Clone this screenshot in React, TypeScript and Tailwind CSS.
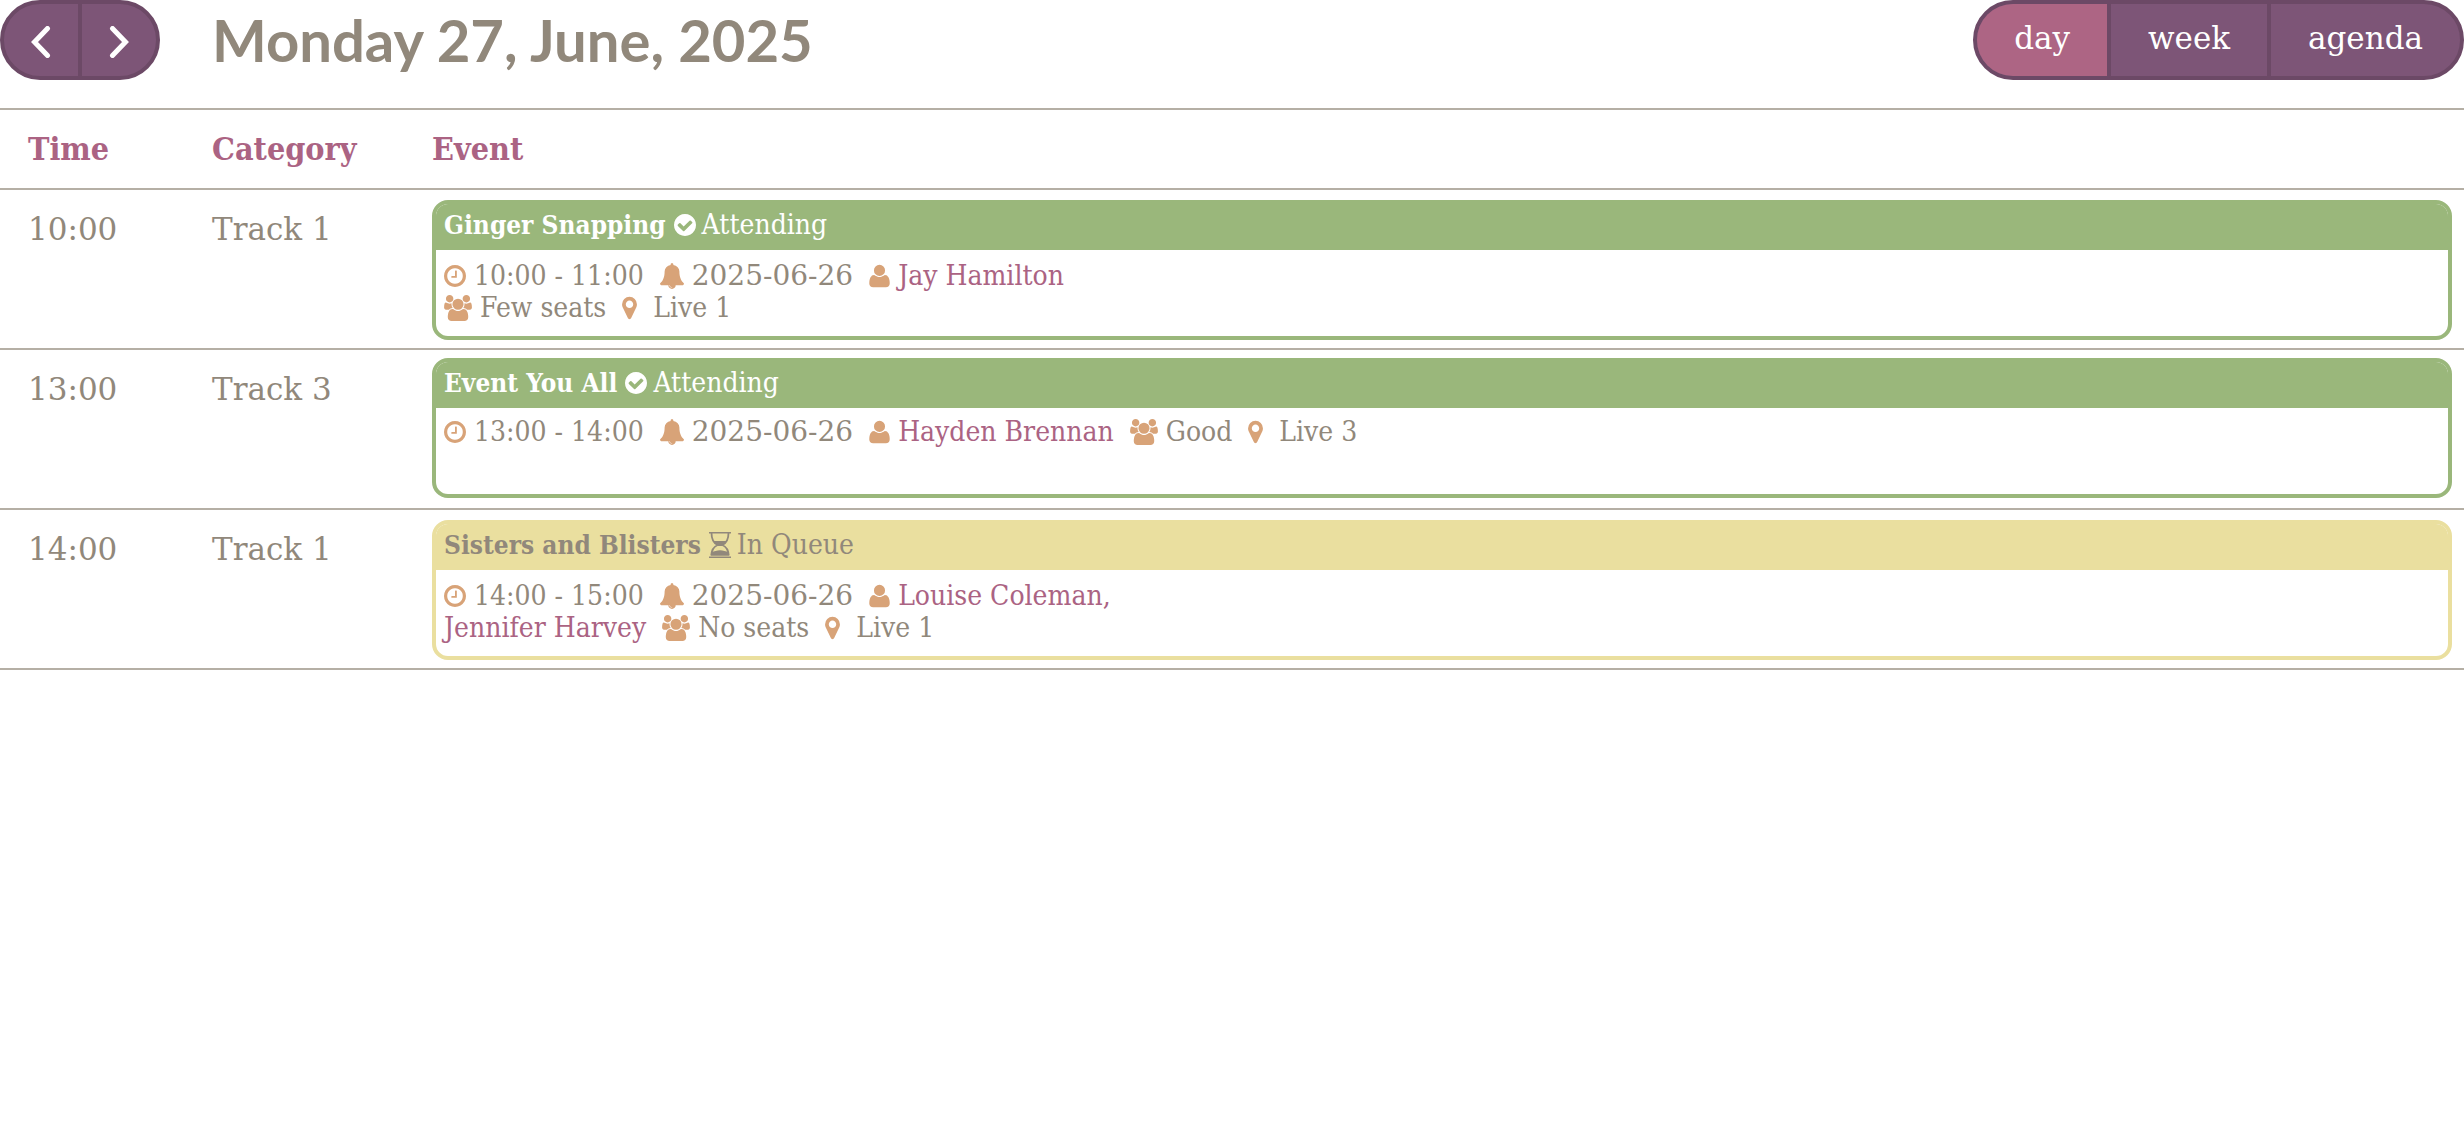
import type { ReactNode } from "react";

type IconProps = { d: string; viewBox: string; className: string; flip?: boolean };

function Icon({ d, viewBox, className, flip }: IconProps) {
  return (
    <svg viewBox={viewBox} className={`inline-block shrink-0 fill-current ${className}`} aria-hidden="true">
      <path d={d} transform={flip ? "scale(1,-1)" : undefined} />
    </svg>
  );
}

const ClockIcon = () => (
  <Icon
    viewBox="128 0 1536 1792"
    className="h-[26px] w-[22px]"
    d="M1024 544v448q0 14-9 23t-23 9H672q-14 0-23-9t-9-23v-64q0-14 9-23t23-9h224V544q0-14 9-23t23-9h64q14 0 23 9t9 23zm416 352q0-148-73-273t-198-198-273-73-273 73-198 198-73 273 73 273 198 198 273 73 273-73 198-198 73-273zm224 0q0 209-103 385.5T1281.5 1561 896 1664t-385.5-103T231 1281.5 128 896t103-385.5T510.5 231 896 128t385.5 103T1561 510.5 1664 896z"
  />
);

const BellIcon = () => (
  <Icon
    viewBox="64 0 1664 1792"
    className="h-[26px] w-[24px]"
    d="M912 1696q0-16-16-16-59 0-101.5-42.5T752 1536q0-16-16-16t-16 16q0 73 51.5 124.5T896 1712q16 0 16-16zm816-288q0 52-38 90t-90 38h-448q0 106-75 181t-181 75-181-75-75-181H192q-52 0-90-38t-38-90q50-42 91-88t85-119.5 74.5-158.5 50-206T384 576q0-152 117-282.5T808 135q-8-19-8-39 0-40 28-68t68-28 68 28 28 68q0 20-8 39 190 28 307 158.5T1408 576q0 139 19.5 260t50 206 74.5 158.5 85 119.5 91 88z"
  />
);

const UserIcon = () => (
  <Icon
    flip
    viewBox="0 -1536 1408 1792"
    className="h-[26px] w-[21px]"
    d="M1408 131q0 -120 -73 -189.5t-194 -69.5h-874q-121 0 -194 69.5t-73 189.5q0 53 3.5 103.5t14 109t26.5 108.5t43 97.5t62 81t85.5 53.5t111.5 20q9 0 42 -21.5t74.5 -48t108 -48t133.5 -21.5t133.5 21.5t108 48t74.5 48t42 21.5q61 0 111.5 -20t85.5 -53.5t62 -81t43 -97.5t26.5 -108.5t14 -109t3.5 -103.5zM1088 1024q0 -159 -112.5 -271.5t-271.5 -112.5t-271.5 112.5t-112.5 271.5t112.5 271.5t271.5 112.5t271.5 -112.5t112.5 -271.5z"
  />
);

const UsersIcon = () => (
  <Icon
    viewBox="64 0 1920 1792"
    className="h-[26px] w-[28px]"
    d="M657 896q-162 5-265 128H258q-82 0-138-40.5T64 865q0-353 124-353 6 0 43.5 21t97.5 42.5T448 597q67 0 133-23-5 37-5 66 0 139 81 256zm1071 637q0 120-73 189.5t-194 69.5H587q-121 0-194-69.5T320 1533q0-53 3.5-103.5t14-109T364 1212t43-97.5 62-81 85.5-53.5T666 960q10 0 43 21.5t73 48 107 48 135 21.5 135-21.5 107-48 73-48 43-21.5q61 0 111.5 20t85.5 53.5 62 81 43 97.5 26.5 108.5 14 109 3.5 103.5zM704 256q0 106-75 181t-181 75-181-75-75-181 75-181 181-75 181 75 75 181zm704 384q0 159-112.5 271.5T1024 1024 752.5 911.5 640 640t112.5-271.5T1024 256t271.5 112.5T1408 640zm576 225q0 78-56 118.5t-138 40.5h-134q-103-123-265-128 81-117 81-256 0-29-5-66 66 23 133 23 59 0 119-21.5t97.5-42.5 43.5-21q124 0 124 353zm-128-609q0 106-75 181t-181 75-181-75-75-181 75-181 181-75 181 75 75 181z"
  />
);

const MarkerIcon = () => (
  <Icon
    viewBox="384 0 1024 1792"
    className="mr-2 h-[26px] w-[15px]"
    d="M1152 640q0-106-75-181t-181-75-181 75-75 181 75 181 181 75 181-75 75-181zm256 0q0 109-33 179l-364 774q-16 33-47.5 52t-67.5 19-67.5-19-46.5-52L417 819q-33-70-33-179 0-212 150-362t362-150 362 150 150 362z"
  />
);

const CheckIcon = () => (
  <Icon
    viewBox="128 0 1536 1792"
    className="h-[26px] w-[22px]"
    d="M1412 734q0-28-18-46l-91-90q-19-19-45-19t-45 19l-408 407-226-226q-19-19-45-19t-45 19l-91 90q-18 18-18 46 0 27 18 45l362 362q19 19 45 19 27 0 46-19l543-543q18-18 18-45zm252 162q0 209-103 385.5T1281.5 1561 896 1664t-385.5-103T231 1281.5 128 896t103-385.5T510.5 231 896 128t385.5 103T1561 510.5 1664 896z"
  />
);

const HourglassIcon = () => (
  <svg viewBox="0 0 22 26" className="h-[26px] w-[22px] shrink-0" aria-hidden="true">
    <path d="M0 0h22v1.600H0zM0 24.400h22V26H0z" fill="currentColor" />
    <path d="M2.500 1C2.500 8 5.500 11.500 8.600 13c-3.100 1.500-6.100 5-6.100 10M19.500 1C19.500 8 16.500 11.500 13.400 13c3.100 1.500 6.100 5 6.100 10" fill="none" stroke="currentColor" strokeWidth="1.800" />
    <path d="M4 9h14c-1.200 2-2.800 3.300-4.500 4v1h-5v-1C6.800 12.300 5.200 11 4 9zM1.600 23.800c.1-1.500.4-2.900.9-4 2.500-.4 5.500-1.600 8.500-1.600s6 1.200 8.500 1.600c.5 1.100.8 2.500.9 4z" fill="currentColor" />
  </svg>
);

function Arrow({ d }: { d: string }) {
  return (
    <svg viewBox="0 0 20 32" className="h-8 w-5" fill="none" stroke="currentColor" strokeWidth="5" strokeLinecap="round" aria-hidden="true">
      <path d={d} />
    </svg>
  );
}

type CalendarEvent = {
  start: string;
  end: string;
  track: string;
  title: string;
  queued?: boolean;
  deadline: string;
  people: string[];
  seats: string;
  room: string;
  singleLine?: boolean;
};

const events: CalendarEvent[] = [
  { start: "10:00", end: "11:00", track: "Track 1", title: "Ginger Snapping", deadline: "2025-06-26", people: ["Jay Hamilton"], seats: "Few seats", room: "Live 1" },
  { start: "13:00", end: "14:00", track: "Track 3", title: "Event You All", deadline: "2025-06-26", people: ["Hayden Brennan"], seats: "Good", room: "Live 3", singleLine: true },
  { start: "14:00", end: "15:00", track: "Track 1", title: "Sisters and Blisters", queued: true, deadline: "2025-06-26", people: ["Louise Coleman", "Jennifer Harvey"], seats: "No seats", room: "Live 1" },
];

function Detail({ icon, children }: { icon: ReactNode; children: ReactNode }) {
  return (
    <span className="flex items-center gap-2">
      <span className="flex text-[#d8a378]">{icon}</span>
      <span>{children}</span>
    </span>
  );
}

function Person({ name, comma }: { name: string; comma?: boolean }) {
  return (
    <a href="#person" className="text-[#ab6383]">
      {name}
      {comma ? "," : ""}
    </a>
  );
}

function EventCard({ event }: { event: CalendarEvent }) {
  const [first, second] = event.people;
  const seats = (
    <>
      <Detail icon={<UsersIcon />}>{event.seats}</Detail>
      <Detail icon={<MarkerIcon />}>{event.room}</Detail>
    </>
  );
  return (
    <article
      className={`min-h-[140px] overflow-hidden rounded-2xl border-4 font-['DejaVu_Serif_Condensed','DejaVu_Serif',serif] text-[28px] leading-8 ${
        event.queued ? "border-[#eadf9f]" : "border-[#9ab77b]"
      }`}
    >
      <header className={`flex h-[46px] items-center gap-2 px-2 pb-1 ${event.queued ? "bg-[#eadf9f]" : "bg-[#9ab77b] text-white"}`}>
        <h2 className="text-[26px] font-bold">{event.title}</h2>
        <span className="flex items-center gap-1.5">
          {event.queued ? <HourglassIcon /> : <CheckIcon />}
          {event.queued ? "In Queue" : "Attending"}
        </span>
      </header>
      <div className={`px-2 ${event.singleLine ? "pt-2" : "pt-2.5"}`}>
        <div className="flex items-center gap-4">
          <Detail icon={<ClockIcon />}>
            {event.start} - {event.end}
          </Detail>
          <Detail icon={<BellIcon />}>
            <time className="font-['DejaVu_Serif',serif]">{event.deadline}</time>
          </Detail>
          <Detail icon={<UserIcon />}>
            <Person name={first} comma={Boolean(second)} />
          </Detail>
          {event.singleLine && seats}
        </div>
        {!event.singleLine && (
          <div className="flex items-center gap-4">
            {second && <Person name={second} />}
            {seats}
          </div>
        )}
      </div>
    </article>
  );
}

const views = ["day", "week", "agenda"];

export default function App() {
  return (
    <main className="bg-white font-['DejaVu_Serif',serif] text-[31px] text-[#91887b]">
      <header className="flex h-20 items-stretch">
        <nav className="flex divide-x-4 divide-[#6c4966] overflow-hidden rounded-full border-4 border-[#6c4966] bg-[#7d5577] text-white">
          <button type="button" aria-label="Previous day" className="flex w-[78px] items-center justify-center pt-1">
            <Arrow d="M16.500 2.500 3.500 16l13 13.500" />
          </button>
          <button type="button" aria-label="Next day" className="flex w-[74px] items-center justify-center pt-1">
            <Arrow d="M3.500 2.500l13 13.500-13 13.500" />
          </button>
        </nav>
        <h1 className="flex-1 pl-[52px] font-[Lato,sans-serif] text-[58px] leading-[80px] font-bold">Monday 27, June, 2025</h1>
        <div role="group" aria-label="View" className="flex divide-x-4 divide-[#6c4966] overflow-hidden rounded-full border-4 border-[#6c4966] bg-[#7d5577] text-white">
          {views.map((view) => (
            <button key={view} type="button" aria-pressed={view === "day"} className="px-[37px] pb-1 aria-pressed:bg-[#ad6584]">
              {view}
            </button>
          ))}
        </div>
      </header>
      <table className="mt-7 w-full table-fixed border-separate border-spacing-0 border-b-2 border-[#b5afa5] text-left">
        <thead>
          <tr className="font-['DejaVu_Serif_Condensed','DejaVu_Serif',serif] text-[32px] leading-[78px] text-[#ab6383]">
            <th className="w-[212px] border-t-2 border-[#b5afa5] pl-7">Time</th>
            <th className="w-[220px] border-t-2 border-[#b5afa5]">Category</th>
            <th className="border-t-2 border-[#b5afa5]">Event</th>
          </tr>
        </thead>
        <tbody>
          {events.map((event) => (
            <tr key={event.start} className="align-top leading-[78px]">
              <td className="border-t-2 border-[#b5afa5] pl-7">{event.start}</td>
              <td className="border-t-2 border-[#b5afa5]">{event.track}</td>
              <td className={`border-t-2 border-[#b5afa5] pr-3 ${event.singleLine ? "pt-2 pb-2.5" : "pt-2.5 pb-2"}`}>
                <EventCard event={event} />
              </td>
            </tr>
          ))}
        </tbody>
      </table>
    </main>
  );
}
